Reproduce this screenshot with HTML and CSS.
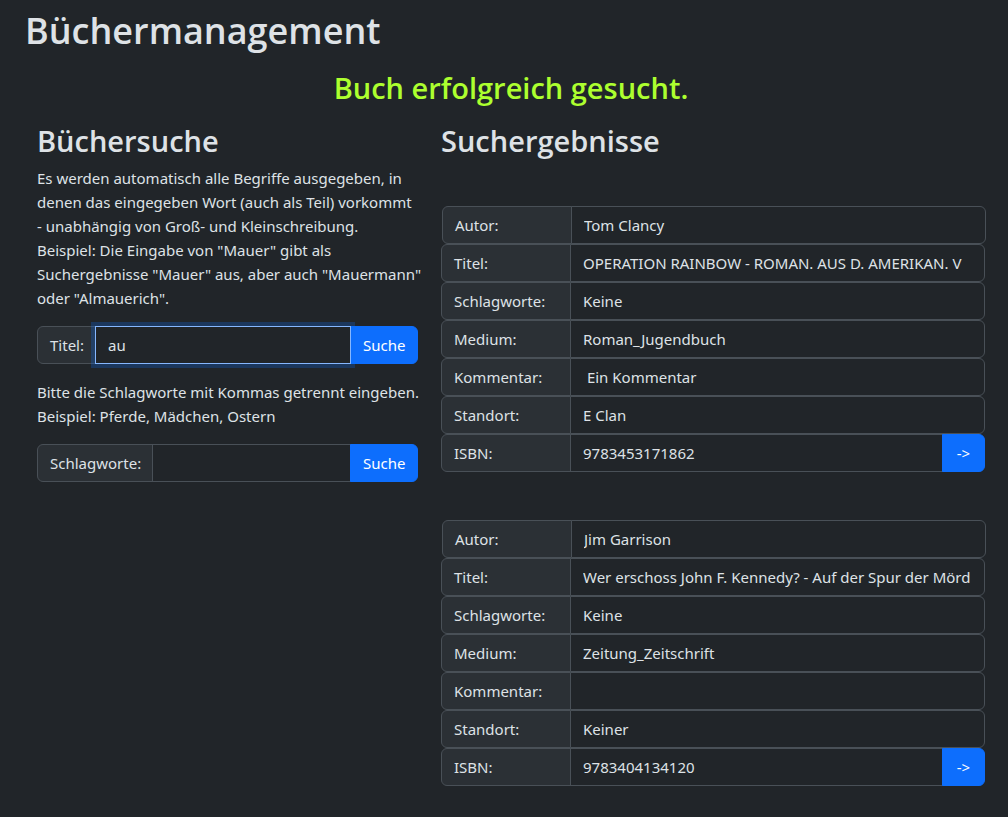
FILE: index.html
```html
<!DOCTYPE html>
<html lang="de">
<head>
<meta charset="utf-8">
<meta name="viewport" content="width=device-width, initial-scale=1">
<title>Büchermanagement</title>
<link rel="stylesheet" href="styles.css">
</head>
<body>
<main class="page">
  <h1 class="title">Büchermanagement</h1>
  <h2 class="status" role="status">Buch erfolgreich gesucht.</h2>
  <div class="columns">
    <section class="search">
      <h2 class="heading">Büchersuche</h2>
      <p class="hint">Es werden automatisch alle Begriffe ausgegeben, in<br>denen das eingegeben Wort (auch als Teil) vorkommt<br>- unabhängig von Groß- und Kleinschreibung.<br>Beispiel: Die Eingabe von "Mauer" gibt als<br>Suchergebnisse "Mauer" aus, aber auch "Mauermann"<br>oder "Almauerich".</p>
      <form class="group">
        <label class="label label-title" for="title">Titel:</label>
        <input class="field is-active" id="title" type="text" value="au">
        <button class="button" type="submit">Suche</button>
      </form>
      <p class="hint">Bitte die Schlagworte mit Kommas getrennt eingeben.<br>Beispiel: Pferde, Mädchen, Ostern</p>
      <form class="group">
        <label class="label label-tags" for="tags">Schlagworte:</label>
        <input class="field" id="tags" type="text">
        <button class="button" type="submit">Suche</button>
      </form>
    </section>
    <section class="results">
      <h2 class="heading">Suchergebnisse</h2>
      <form class="book">
        <div class="group"><label class="label" for="a1">Autor:</label><input class="field" id="a1" value="Tom Clancy" readonly></div>
        <div class="group"><label class="label" for="t1">Titel:</label><input class="field" id="t1" value="OPERATION RAINBOW - ROMAN. AUS D. AMERIKAN. V" readonly></div>
        <div class="group"><label class="label" for="s1">Schlagworte:</label><input class="field" id="s1" value="Keine" readonly></div>
        <div class="group"><label class="label" for="m1">Medium:</label><input class="field" id="m1" value="Roman_Jugendbuch" readonly></div>
        <div class="group"><label class="label" for="k1">Kommentar:</label><input class="field" id="k1" value=" Ein Kommentar" readonly></div>
        <div class="group"><label class="label" for="o1">Standort:</label><input class="field" id="o1" value="E Clan" readonly></div>
        <div class="group"><label class="label" for="i1">ISBN:</label><input class="field" id="i1" value="9783453171862" readonly><button class="button button-go" type="submit">-&gt;</button></div>
      </form>
      <form class="book">
        <div class="group"><label class="label" for="a2">Autor:</label><input class="field" id="a2" value="Jim Garrison" readonly></div>
        <div class="group"><label class="label" for="t2">Titel:</label><input class="field" id="t2" value="Wer erschoss John F. Kennedy? - Auf der Spur der Mörd" readonly></div>
        <div class="group"><label class="label" for="s2">Schlagworte:</label><input class="field" id="s2" value="Keine" readonly></div>
        <div class="group"><label class="label" for="m2">Medium:</label><input class="field" id="m2" value="Zeitung_Zeitschrift" readonly></div>
        <div class="group"><label class="label" for="k2">Kommentar:</label><input class="field" id="k2" value="" readonly></div>
        <div class="group"><label class="label" for="o2">Standort:</label><input class="field" id="o2" value="Keiner" readonly></div>
        <div class="group"><label class="label" for="i2">ISBN:</label><input class="field" id="i2" value="9783404134120" readonly><button class="button button-go" type="submit">-&gt;</button></div>
      </form>
    </section>
  </div>
</main>
</body>
</html>
```
FILE: styles.css
```css
*, *::before, *::after { box-sizing: border-box; }

body {
  margin: 0;
  background: #212529;
  color: #dee2e6;
  font: 400 15px/24px "Segoe UI", "Noto Sans", "Open Sans", sans-serif;
}

h1, h2, p { margin: 0; }

.page { padding: 7px 11px 31px 25px; }

.title {
  font-family: "Segoe UI", "Open Sans", sans-serif;
  font-size: 36px;
  line-height: 48px;
  font-weight: 600;
}

.status {
  margin-top: 14px;
  color: #adff2f;
  font-family: "Segoe UI", "Open Sans", sans-serif;
  font-size: 29px;
  line-height: 38px;
  font-weight: 600;
  text-align: center;
}

.columns {
  display: grid;
  grid-template-columns: minmax(0, 5fr) minmax(0, 7fr);
  margin-top: 15px;
}

.search { padding: 0 12px; }
.results { padding: 0 11px; }

.heading {
  font-family: "Segoe UI", "Open Sans", sans-serif;
  font-size: 29px;
  line-height: 38px;
  font-weight: 600;
}

.hint { margin: 6px 0 16px; white-space: nowrap; }
.group + .hint { margin-top: 16px; }

.book { margin-top: 46px; }
.book + .book { margin-top: 48px; }
.book .group { margin-right: 1px; }
.book .group:first-child { margin-left: 1px; margin-right: 0; }

.group { display: flex; height: 38px; }

.label {
  flex: none;
  width: 130px;
  padding: 6px 12px;
  background: #2b3035;
  border: 1px solid #495057;
  border-radius: 6px 0 0 6px;
  white-space: nowrap;
}
.label-title { width: 59px; }
.label-tags { width: 116px; }

.field {
  flex: 1;
  min-width: 0;
  margin: 0 0 0 -1px;
  padding: 6px 12px;
  background: #212529;
  border: 1px solid #495057;
  border-radius: 0;
  color: #dee2e6;
  font: inherit;
  outline: 0;
}
.field:last-child { border-radius: 0 6px 6px 0; }
.field.is-active, .field:focus {
  position: relative;
  z-index: 1;
  border-color: #86b7fe;
  box-shadow: 0 0 0 4px rgba(13, 110, 253, 0.25);
}

.button {
  flex: none;
  width: 68px;
  margin: 0 0 0 -1px;
  padding: 6px 12px;
  background: #0d6efd;
  border: 1px solid #0d6efd;
  border-radius: 0 6px 6px 0;
  color: #fff;
  font: inherit;
}
.button-go { width: 43px; }
```
